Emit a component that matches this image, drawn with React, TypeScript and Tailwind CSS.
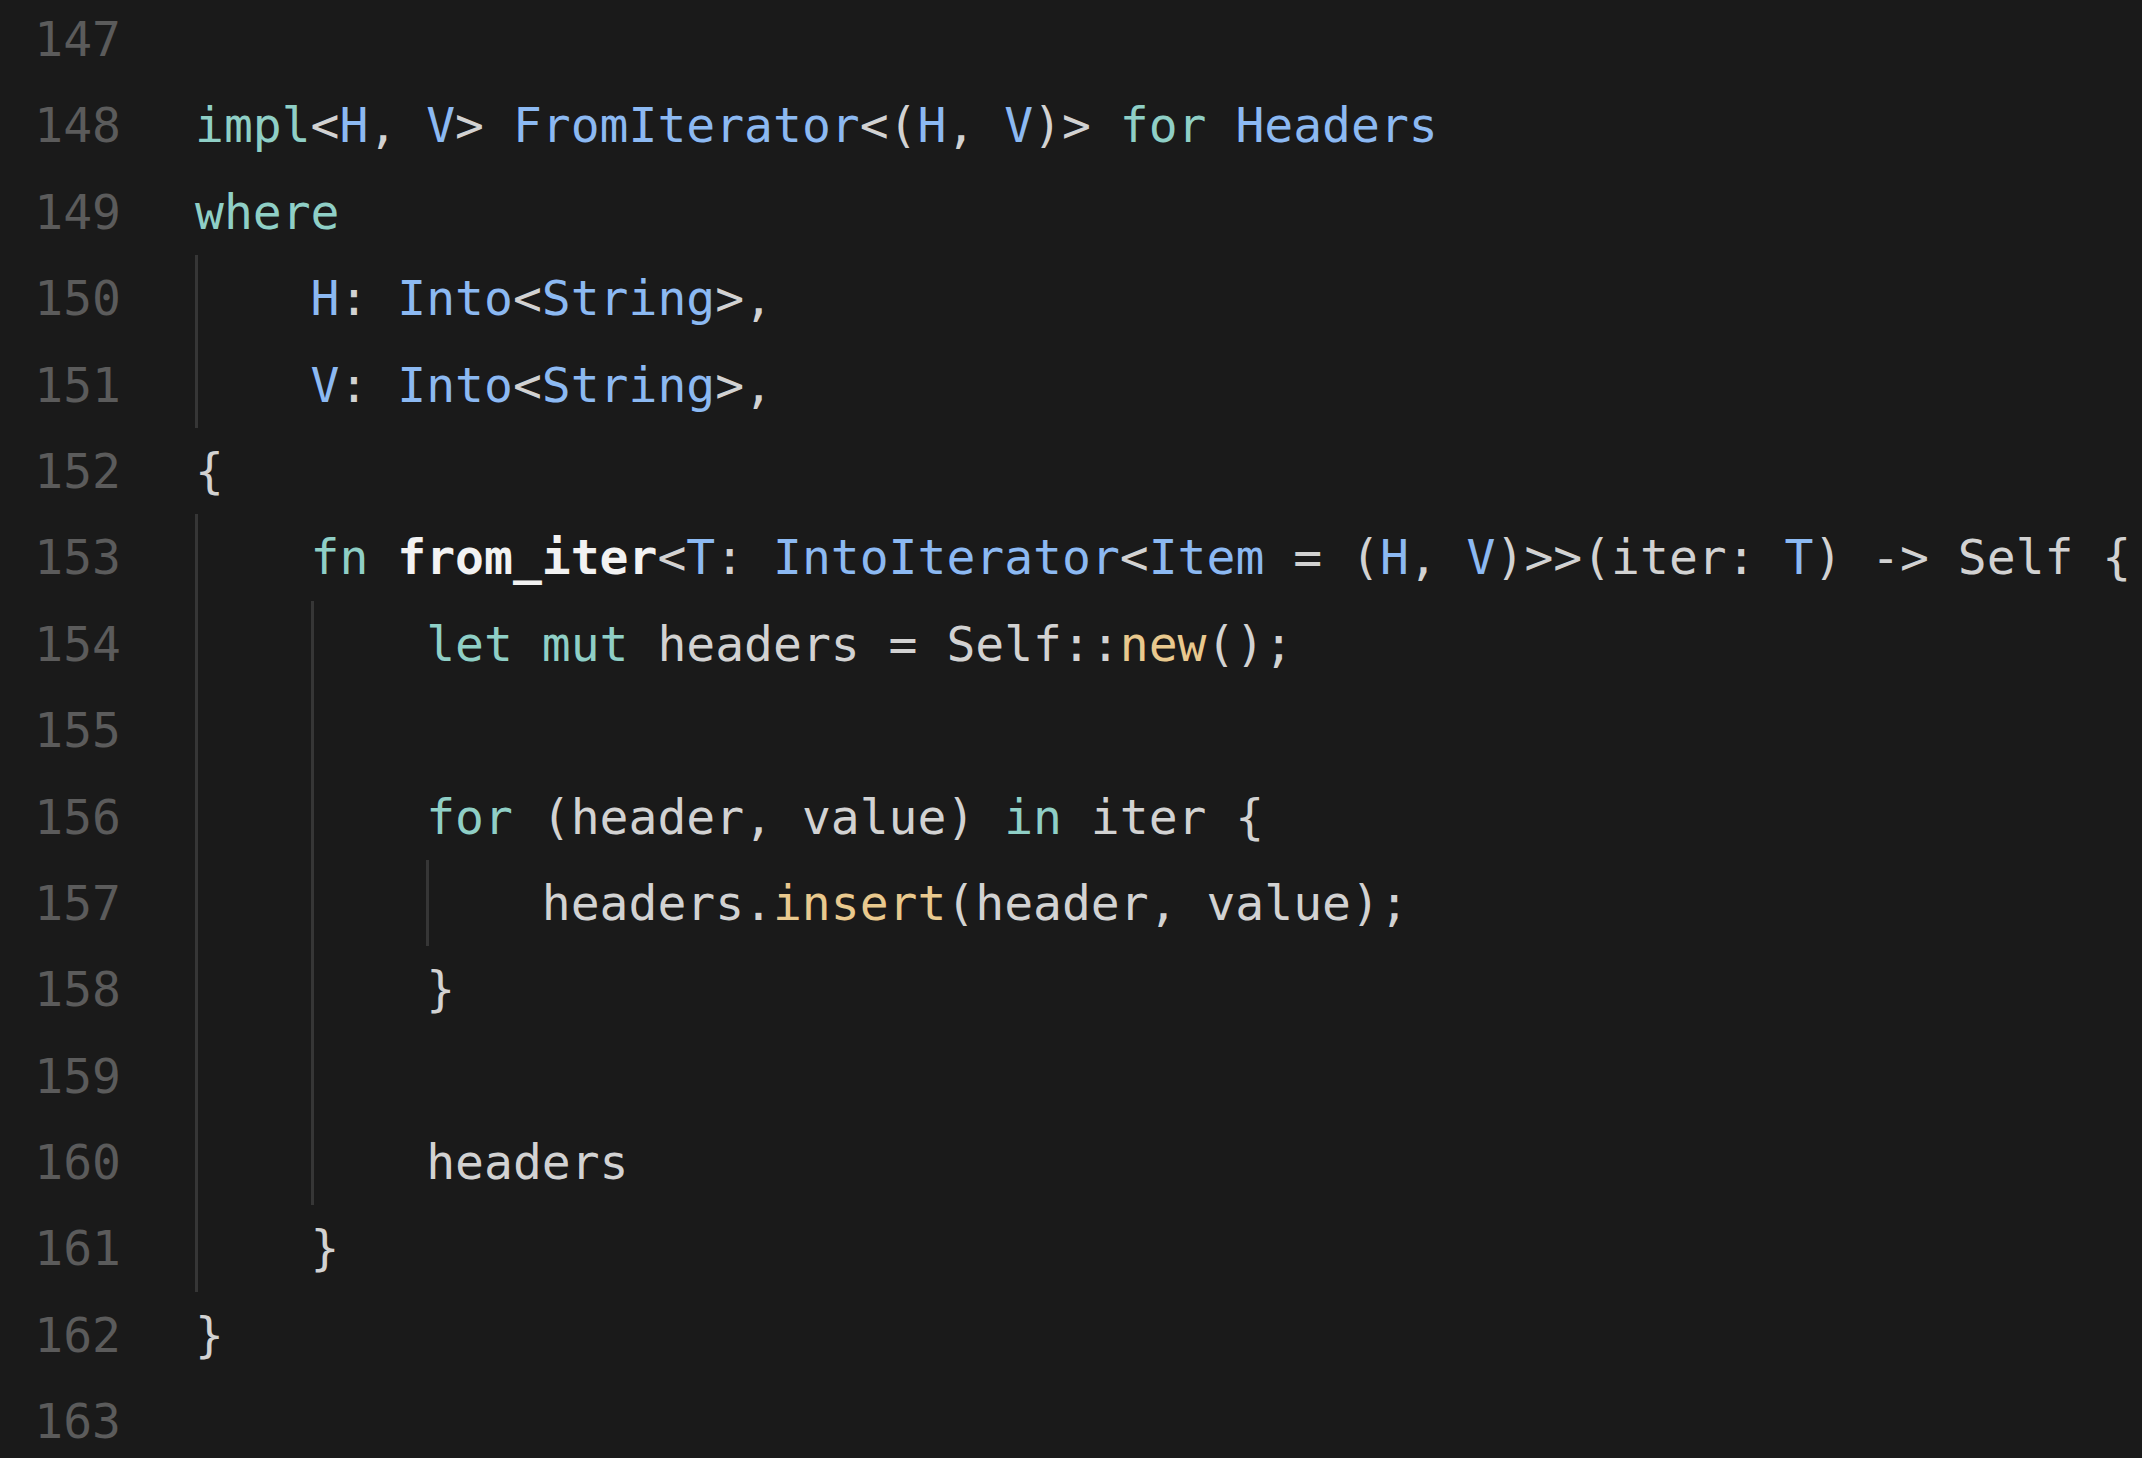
import React from 'react';

type Tok = [string, string];

const kw = 'text-[#8fcfc6]';
const ty = 'text-[#8cb9f2]';
const tx = 'text-[#d2d2d2]';
const fnc = 'text-[#e9c98e]';
const bold = 'text-[#f2f2f2] font-bold';

const lines: { n: number; guides: number; toks: Tok[] }[] = [
    { n: 147, guides: 0, toks: [] },
    {
        n: 148,
        guides: 0,
        toks: [
            ['impl', kw], ['<', tx], ['H', ty], [', ', tx], ['V', ty], ['> ', tx],
            ['FromIterator', ty], ['<(', tx], ['H', ty], [', ', tx], ['V', ty], [')> ', tx],
            ['for', kw], [' ', tx], ['Headers', ty],
        ],
    },
    { n: 149, guides: 0, toks: [['where', kw]] },
    { n: 150, guides: 1, toks: [['H', ty], [': ', tx], ['Into', ty], ['<', tx], ['String', ty], ['>,', tx]] },
    { n: 151, guides: 1, toks: [['V', ty], [': ', tx], ['Into', ty], ['<', tx], ['String', ty], ['>,', tx]] },
    { n: 152, guides: 0, toks: [['{', tx]] },
    {
        n: 153,
        guides: 1,
        toks: [
            ['fn', kw], [' ', tx], ['from_iter', bold], ['<', tx], ['T', ty], [': ', tx],
            ['IntoIterator', ty], ['<', tx], ['Item', ty], [' = (', tx], ['H', ty], [', ', tx],
            ['V', ty], [')>>(iter: ', tx], ['T', ty], [') -> Self {', tx],
        ],
    },
    {
        n: 154,
        guides: 2,
        toks: [['let', kw], [' ', tx], ['mut', kw], [' headers = Self::', tx], ['new', fnc], ['();', tx]],
    },
    { n: 155, guides: 2, toks: [] },
    {
        n: 156,
        guides: 2,
        toks: [['for', kw], [' (header, value) ', tx], ['in', kw], [' iter {', tx]],
    },
    { n: 157, guides: 3, toks: [['headers.', tx], ['insert', fnc], ['(header, value);', tx]] },
    { n: 158, guides: 2, toks: [['}', tx]] },
    { n: 159, guides: 2, toks: [] },
    { n: 160, guides: 2, toks: [['headers', tx]] },
    { n: 161, guides: 1, toks: [['}', tx]] },
    { n: 162, guides: 0, toks: [['}', tx]] },
    { n: 163, guides: 0, toks: [] },
];

export default function App() {
    return (
        <div className="w-[2142px] h-[1458px] overflow-hidden bg-[#1a1a1a] font-['DejaVu_Sans_Mono',monospace] text-[48px]">
            <div className="-mt-[4px]">
                {lines.map((line) => (
                    <div key={line.n} className="flex h-[86.4px] leading-[86.4px] whitespace-pre">
                        <div className="w-[121px] shrink-0 text-right text-[#5b5b5b]">{line.n}</div>
                        <div className="w-[74px] shrink-0" />
                        {Array.from({ length: line.guides }).map((_, i) => (
                            <span key={i} className="w-[4ch] shrink-0 border-l-[3px] border-[#363636]" />
                        ))}
                        <div>
                            {line.toks.map(([t, c], i) => (
                                <span key={i} className={c}>{t}</span>
                            ))}
                        </div>
                    </div>
                ))}
            </div>
        </div>
    );
}
